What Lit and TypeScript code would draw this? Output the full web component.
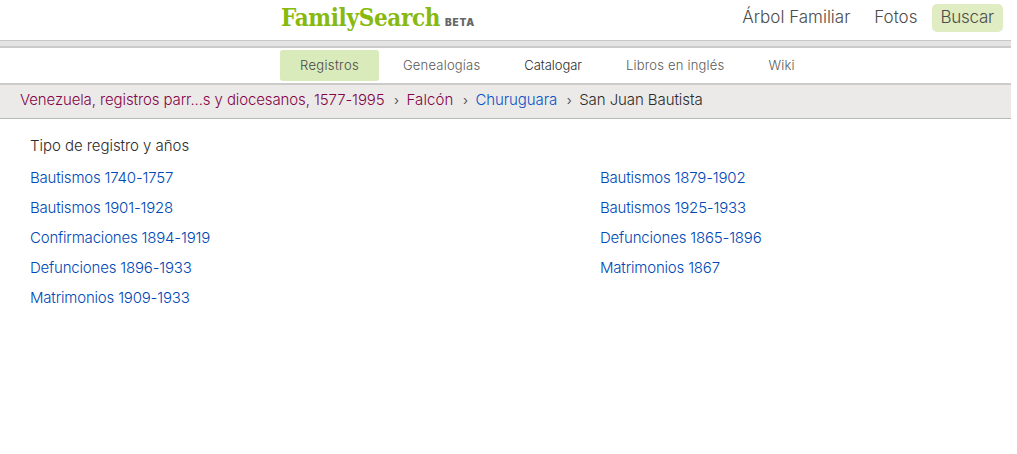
import { LitElement, html, css } from 'lit';
import { customElement, property } from 'lit/decorators.js';
import { classMap } from 'lit/directives/class-map.js';

interface NavItem {
  label: string;
  tone?: string;
}

const MAIN_NAV: NavItem[] = [
  { label: 'Árbol Familiar' },
  { label: 'Fotos' },
  { label: 'Buscar', tone: 'active' },
];

const SUB_NAV: NavItem[] = [
  { label: 'Registros', tone: 'active' },
  { label: 'Genealogías' },
  { label: 'Catalogar', tone: 'dark' },
  { label: 'Libros en inglés' },
  { label: 'Wiki' },
];

const CRUMBS: NavItem[] = [
  { label: 'Venezuela, registros parr...s y diocesanos, 1577-1995', tone: 'collection' },
  { label: 'Falcón', tone: 'visited' },
  { label: 'Churuguara', tone: 'link' },
  { label: 'San Juan Bautista', tone: 'current' },
];

const RECORDS = [
  'Bautismos 1740-1757',
  'Bautismos 1901-1928',
  'Confirmaciones 1894-1919',
  'Defunciones 1896-1933',
  'Matrimonios 1909-1933',
  'Bautismos 1879-1902',
  'Bautismos 1925-1933',
  'Defunciones 1865-1896',
  'Matrimonios 1867',
];

@customElement('site-header')
export class SiteHeader extends LitElement {
  static styles = css`
    :host {
      display: flex;
      justify-content: space-between;
      box-sizing: border-box;
      height: 40px;
      padding: 4px 8px 0 281px;
    }

    .brand {
      display: flex;
      align-items: baseline;
      height: 28px;
      line-height: 28px;
    }

    .logo {
      font-family: 'DejaVu Serif Condensed', 'DejaVu Serif', serif;
      font-size: 24px;
      font-weight: bold;
      letter-spacing: -0.36px;
      color: #87b90f;
    }

    .beta {
      margin-left: 5px;
      font-size: 10px;
      font-weight: 900;
      letter-spacing: 0.8px;
      color: #666;
    }

    nav {
      display: flex;
      gap: 6px;
    }

    a {
      height: 28px;
      padding: 0 9px;
      border-radius: 5px;
      font-size: 17px;
      line-height: 27px;
      color: #4c4c4c;
    }

    .active {
      padding-left: 8px;
      background: #e0ecc1;
      letter-spacing: -0.24px;
    }
  `;

  render() {
    return html`
      <div class="brand">
        <span class="logo">FamilySearch</span>
        <span class="beta">BETA</span>
      </div>
      <nav>
        ${MAIN_NAV.map((item) => html`
          <a class=${classMap({ active: item.tone === 'active' })}>${item.label}</a>
        `)}
      </nav>
    `;
  }
}

@customElement('sub-nav')
export class SubNav extends LitElement {
  static styles = css`
    :host {
      display: flex;
      gap: 4px;
      box-sizing: border-box;
      height: 37px;
      padding: 2px 0 0 280px;
      border-bottom: 2px solid #cbcbcb;
    }

    a {
      height: 31px;
      padding: 0 20px;
      border-radius: 3px;
      font-size: 13px;
      line-height: 31px;
      letter-spacing: 0.2px;
      color: #595959;
    }

    .active {
      background: #d9eabb;
      letter-spacing: 0.34px;
      color: #484848;
    }

    .dark {
      letter-spacing: -0.06px;
      color: #2b2b2b;
    }
  `;

  render() {
    return SUB_NAV.map((item) => html`<a class=${item.tone ?? ''}>${item.label}</a>`);
  }
}

@customElement('crumb-trail')
export class CrumbTrail extends LitElement {
  static styles = css`
    :host {
      display: flex;
      box-sizing: border-box;
      height: 34px;
      padding-left: 20px;
      border-bottom: 1px solid #b3bdb3;
      background: #eceae8;
      font-size: 15px;
      line-height: 30px;
      white-space: nowrap;
    }

    .collection {
      letter-spacing: -0.11px;
      color: #820549;
    }

    .visited {
      letter-spacing: 0.1px;
      color: #820549;
    }

    .link {
      letter-spacing: -0.08px;
      color: #0a52c6;
    }

    .current {
      letter-spacing: -0.08px;
      color: #2b2b2b;
    }

    .separator {
      box-sizing: border-box;
      width: 22px;
      padding-left: 2px;
      font-size: 13px;
      font-weight: 400;
      text-align: center;
      color: #555;
    }
  `;

  render() {
    return CRUMBS.map((crumb, i) => html`
      ${i > 0 ? html`<span class="separator">›</span>` : ''}
      <span class=${crumb.tone ?? ''}>${crumb.label}</span>
    `);
  }
}

@customElement('record-list')
export class RecordList extends LitElement {
  @property({ type: Array }) records: string[] = [];

  static styles = css`
    :host {
      display: block;
      padding: 12px 0 0 30px;
      font-size: 15px;
      line-height: 30px;
    }

    h2 {
      margin: 0 0 2px;
      font-size: 15px;
      font-weight: inherit;
      letter-spacing: -0.05px;
      color: #2b2b2b;
    }

    ul {
      display: grid;
      grid-auto-flow: column;
      grid-template-rows: repeat(5, 30px);
      grid-template-columns: 570px 1fr;
      margin: 0;
      padding: 0;
      list-style: none;
      letter-spacing: -0.19px;
      color: #0048b5;
    }
  `;

  render() {
    return html`
      <h2>Tipo de registro y años</h2>
      <ul>
        ${this.records.map((record) => html`<li><a>${record}</a></li>`)}
      </ul>
    `;
  }
}

@customElement('app-root')
export class AppRoot extends LitElement {
  static styles = css`
    :host {
      display: block;
      height: 454px;
      overflow: hidden;
      background: #fff;
      font-family: Inter, 'Open Sans', sans-serif;
      font-weight: 350;
    }

    .page {
      width: 1011px;
    }

    .divider {
      height: 5px;
      border-top: 1px solid #c8c8c8;
      border-bottom: 2px solid #cbcbcb;
      background: #e4e4e4;
    }
  `;

  render() {
    return html`
      <div class="page">
        <site-header></site-header>
        <div class="divider"></div>
        <sub-nav></sub-nav>
        <crumb-trail></crumb-trail>
        <record-list .records=${RECORDS}></record-list>
      </div>
    `;
  }
}
